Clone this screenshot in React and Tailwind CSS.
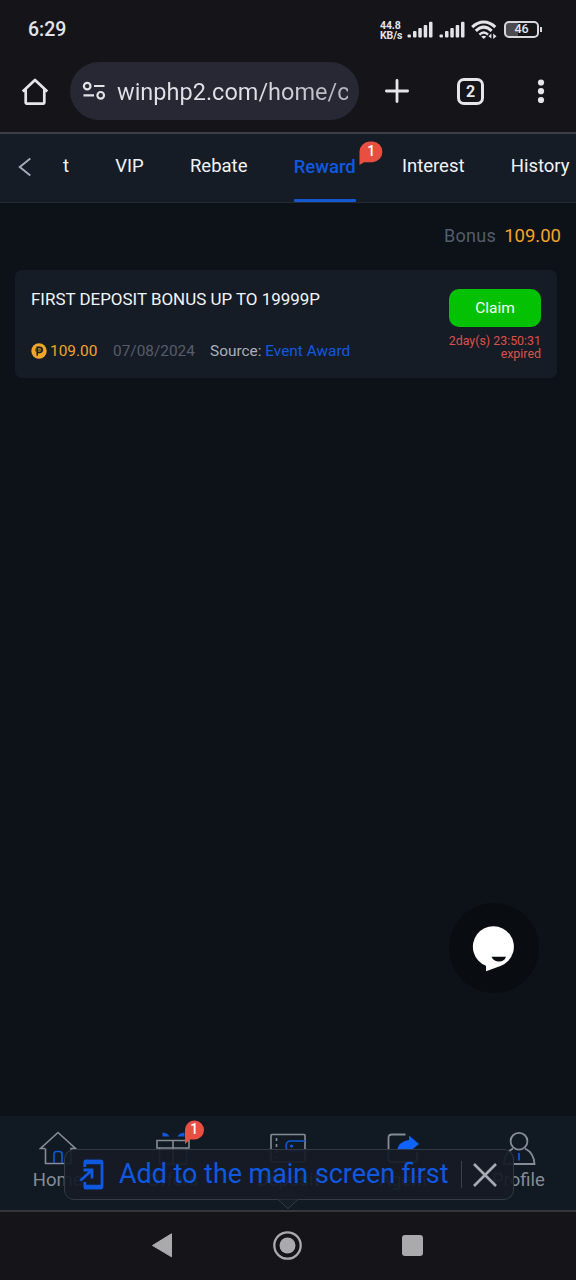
import React from "react";

function SignalBars() {
  return (
    <svg className="h-[18px] w-[27px]" viewBox="0 0 27 18" fill="#e4e4e8">
      <rect x="0.5" y="13.5" width="3.5" height="3" rx="1" />
      <rect x="6" y="10" width="3.5" height="6.5" rx="1" />
      <rect x="11.3" y="7" width="3.5" height="9.5" rx="1" />
      <rect x="16.7" y="4" width="3.5" height="12.5" rx="1" />
      <rect x="22" y="0.8" width="3.5" height="15.7" rx="1" />
    </svg>
  );
}

function StatusBar() {
  return (
    <header className="flex h-[60px] items-center pb-px pl-7">
      <span className="w-[352px] text-[19.5px] font-medium leading-none text-[#e4e4e8]">6:29</span>
      <span className="w-[27px] pt-[3px] text-[10.5px] font-bold leading-[10px] tracking-[-0.1px] text-[#e4e4e8]">
        <span className="block">44.8</span>
        <span className="block">KB/s</span>
      </span>
      <SignalBars />
      <span className="w-[5px]" />
      <SignalBars />
      <svg className="ml-[5px] h-[20px] w-[26px]" viewBox="0 0 26 20" fill="none" stroke="#e4e4e8" strokeWidth="3">
        <path d="M1.2 7.2C8.2 0.4 17.3 0.4 24.3 7.2" />
        <path d="M4.8 10.9C10 6 15.5 6 20.7 10.9" />
        <path d="M8.4 14.6C11.2 11.9 14.3 11.9 17.1 14.6" strokeWidth="2.4" />
        <path d="M12.75 19L10.2 16.6C11.6 15.3 13.9 15.3 15.3 16.6Z" fill="#e4e4e8" stroke="none" />
        <path d="M17.5 16.2L20.4 13.6V18.6ZM25.5 16.2L22.2 19V13.6Z" fill="#e4e4e8" stroke="none" />
      </svg>
      <span className="ml-[7px] flex h-[17px] w-[35px] items-center justify-center rounded-[5px] border-2 border-[#d8d8dc] bg-linear-to-r from-[#4b4b50] from-40% to-[#151419] to-40% text-[12.5px] font-medium leading-none text-[#e4e4e8]">
        46
      </span>
      <span className="ml-px h-[5px] w-[2px] bg-[#d8d8dc]" />
    </header>
  );
}

function AddressBar() {
  return (
    <div className="flex h-[74px] items-start border-b-2 border-[#3d3e45] pt-0.5">
      <svg className="ml-[21px] mt-[15px] h-[30px] w-[28px]" viewBox="0 0 28 30" fill="none" stroke="#e6e5ea" strokeWidth="2.7">
        <path d="M1.7 14.5L14 3L26.3 14.5M4.7 12V25.8Q4.7 26.6 5.5 26.6H22.5Q23.3 26.6 23.3 25.8V12" strokeLinejoin="round" />
      </svg>
      <div className="ml-[21px] flex h-[58px] w-[289px] items-center rounded-full bg-[#282834] pl-[12px]">
        <svg className="h-[20px] w-[24px] shrink-0" viewBox="0 0 24 20" fill="none" stroke="#e1e1e8" strokeWidth="2.2">
          <circle cx="5.2" cy="5.1" r="3.3" />
          <circle cx="18.7" cy="14.3" r="3.3" />
          <path d="M12 5H22.5M1.5 14.4H12" />
        </svg>
        <span className="ml-[11px] mt-[2px] w-[231px] overflow-hidden whitespace-nowrap bg-linear-to-r from-[#e1e1e8] from-58% to-[#b2b1bc] bg-clip-text text-[23.5px] leading-[34px] text-transparent">
          winphp2.com/home/c
        </span>
      </div>
      <svg className="ml-[26px] mt-[17px] h-[24px] w-[24px]" viewBox="0 0 24 24" stroke="#e6e5ea" strokeWidth="2.8">
        <path d="M12 1.4V22.6M1.4 12H22.6" strokeLinecap="round" />
      </svg>
      <span className="ml-[48px] mt-[16px] flex h-[27px] w-[27px] items-center justify-center rounded-[7px] border-[3px] border-[#e6e5ea] text-[16px] font-bold leading-none text-[#e6e5ea]">
        2
      </span>
      <svg className="ml-[53px] mt-[17px] h-[26px] w-[8px]" viewBox="0 0 8 26" fill="#e6e5ea">
        <circle cx="4" cy="3.5" r="3.1" />
        <circle cx="4" cy="12.2" r="3.1" />
        <circle cx="4" cy="21" r="3.1" />
      </svg>
    </div>
  );
}

function Tabs() {
  return (
    <nav className="flex h-[69px] items-center overflow-hidden border-b border-[#252b34] bg-[#161c26] text-[18.5px] text-[#f2f4f8]">
      <svg className="mb-[2px] ml-[18px] h-[20px] w-[14px] shrink-0" viewBox="0 0 14 20" fill="none" stroke="#a3a9b6" strokeWidth="2">
        <path d="M12.3 1.5L1.8 10L12.3 18.5" />
      </svg>
      <div className="ml-[31px] flex h-full gap-[46.2px] leading-[65px]">
        <span>t</span>
        <span>VIP</span>
        <span>Rebate</span>
        <span className="relative h-[68px] leading-[67px] text-[18.5px] font-medium text-[#0e59e0]">
          Reward
          <span className="absolute inset-x-0 bottom-0 h-[3px] rounded-[1px] bg-[#1458d4]" />
          <span className="absolute left-[65px] top-[7px] block h-[25px] w-[25px]">
            <svg className="absolute inset-0" viewBox="0 0 25 25" fill="#e94f40">
              <path d="M0.5 24V10.5A10.3 10.3 0 0 1 10.8 0.5H14A10.4 10.4 0 0 1 14 21.2H5Z" />
            </svg>
            <span className="absolute inset-0 text-center text-[14px] font-medium leading-[21px] text-white">1</span>
          </span>
        </span>
        <span>Interest</span>
        <span>History</span>
      </div>
    </nav>
  );
}

function PesoCoin() {
  return (
    <svg className="h-[16px] w-[16px]" viewBox="0 0 16 16" fill="none">
      <circle cx="8" cy="8" r="7.7" fill="#f2a526" />
      <path d="M6.2 12.8V4.2H8.6A2.6 2.6 0 0 1 8.6 9.4H6.2" stroke="#161c26" strokeWidth="1.5" />
      <path d="M4 6.1H12.2M4 7.8H12.2" stroke="#161c26" strokeWidth="0.8" />
    </svg>
  );
}

function RewardCard() {
  return (
    <section className="ml-[15px] flex h-[108px] w-[542px] justify-between rounded-[7px] bg-[#161c26] pl-4 pr-4">
      <div className="flex flex-col pt-[19px]">
        <h2 className="text-[16.95px] leading-[20px] text-[#f2f4f8]">FIRST DEPOSIT BONUS UP TO 19999P</h2>
        <div className="mt-[32px] flex items-center text-[15.4px] leading-[20px]">
          <PesoCoin />
          <span className="ml-[3px] w-[63px] text-[#f2a526]">109.00</span>
          <span className="w-[97px] text-[#555d6c]">07/08/2024</span>
          <span className="text-[#a9afbb]">Source: <span className="text-[#0e59e0]">Event Award</span></span>
        </div>
      </div>
      <div className="flex w-[93px] flex-col items-end pt-[19px]">
        <button className="h-[38px] w-[92px] rounded-[10px] bg-[#04c104] text-[15.5px] leading-[37px] text-[#f5fff5]">Claim</button>
        <p className="mt-[7px] whitespace-nowrap text-right text-[12.4px] leading-[13px] text-[#dc5248]">
          2day(s) 23:50:31
          <br />
          expired
        </p>
      </div>
    </section>
  );
}

function HomeIcon() {
  return (
    <svg className="h-[38px] w-[38px]" viewBox="0 0 38 38" fill="none" stroke="#858c98" strokeWidth="1.6">
      <path d="M6 19.5H1.5L19 3.5L36.5 19.5H32V34.5H6.5V19.5" />
      <path d="M15 34V25Q15 22.5 17.5 22.5H20.5Q23 22.5 23 25V34" stroke="#0e59e0" />
    </svg>
  );
}

function GiftIcon() {
  return (
    <svg className="h-[38px] w-[38px]" viewBox="0 0 38 38" fill="none" stroke="#858c98" strokeWidth="1.6">
      <path d="M3 11.5H35V19H3ZM5.5 19V35H32.5V19M19 11.5V35" />
      <path d="M8.5 3.5Q14 4 15.5 7.5H8.5ZM30.5 3.5Q25 4 23.5 7.5H30.5Z" fill="#0e59e0" stroke="none" />
    </svg>
  );
}

function WalletIcon() {
  return (
    <svg className="h-[38px] w-[38px]" viewBox="0 0 38 38" fill="none" stroke="#858c98" strokeWidth="1.6">
      <rect x="2" y="5.5" width="34" height="27.5" rx="1" />
      <path d="M7.5 9V29" strokeDasharray="3 3" />
      <path d="M36 12H22C18.5 12 17 14 17 17S18.5 22 22 22H36" stroke="#0e59e0" />
      <circle cx="22.5" cy="17" r="1.6" fill="#0e59e0" stroke="none" />
    </svg>
  );
}

function ShareIcon() {
  return (
    <svg className="h-[38px] w-[38px]" viewBox="0 0 38 38" fill="none" stroke="#858c98" strokeWidth="1.8">
      <path d="M21.5 5.5H8Q4.5 5.5 4.5 9V30Q4.5 33 8 33H29Q33 33 33 30V23" />
      <path d="M25 6.5L35 15L25 23V20.5Q17 19 12.5 23Q14.5 12 25 11Z" fill="#0f62fa" stroke="none" />
    </svg>
  );
}

function ProfileIcon() {
  return (
    <svg className="h-[38px] w-[38px]" viewBox="0 0 38 38" fill="none" stroke="#858c98" strokeWidth="1.8">
      <circle cx="20" cy="12.2" r="8.4" />
      <path d="M14 19.5Q5.5 24 5 35H35.5Q35 24 26 19.5" />
      <path d="M20 24V31.5" stroke="#0e59e0" />
    </svg>
  );
}

const menu = [
  { label: "Home", Icon: HomeIcon },
  { label: "Offers", Icon: GiftIcon, count: 1 },
  { label: "Deposit", Icon: WalletIcon },
  { label: "Agent", Icon: ShareIcon },
  { label: "Profile", Icon: ProfileIcon },
];

function InstallPrompt() {
  return (
    <div className="absolute left-[64px] top-[33px] flex h-[51px] w-[450px] items-center rounded-[10px] border border-[#343a44] bg-[#161b26]/93">
      <svg className="ml-[14px] h-[31px] w-[26px]" viewBox="0 0 26 31" fill="none" stroke="#0e59e0">
        <path d="M5.8 8V3.5Q5.8 2.2 7 2.2H22Q23 2.2 23 3.5V27.5Q23 28.8 22 28.8H7Q5.8 28.8 5.8 27.5V23" strokeWidth="2.8" />
        <path d="M5 3H23M5 28H23" strokeWidth="4.5" />
        <path d="M1.5 21.5L12.5 11.5M4.5 11H13V19.5" strokeWidth="2.8" />
      </svg>
      <span className="ml-[14px] w-[342px] whitespace-nowrap text-[26.9px] leading-none text-[#0e59e0]">Add to the main screen first</span>
      <span className="h-[27px] w-px bg-[#3b414c]" />
      <svg className="ml-[10px] h-[26px] w-[26px]" viewBox="0 0 26 26" stroke="#a7abb3" strokeWidth="2.6">
        <path d="M2 2L24 24M24 2L2 24" />
      </svg>
      <svg className="absolute left-[212px] top-[48px] h-[12px] w-[22px]" viewBox="0 0 22 12" fill="#151d27" stroke="#343a44">
        <path d="M1 1.5L11 10.7L21 1.5" />
      </svg>
    </div>
  );
}

function BottomMenu() {
  return (
    <footer className="relative grid h-[96px] grid-cols-5 border-b-2 border-[#35373d] bg-[#111a22]">
      {menu.map(({ label, Icon, count }) => (
        <div key={label} className="relative flex flex-col items-center pt-[13px] text-[18.5px] leading-[27px] text-[#858c98]">
          <Icon />
          <span>{label}</span>
          {count && (
            <span className="absolute left-[69px] top-[3px] z-10 block h-[25px] w-[20px]">
              <svg className="absolute inset-0" viewBox="0 0 20 25" fill="#e94f40">
                <path d="M1 25V10.5A9.5 9.5 0 1 1 10.5 20.5H6Z" />
              </svg>
              <span className="absolute inset-0 text-center text-[14px] font-medium leading-[21px] text-white">{count}</span>
            </span>
          )}
        </div>
      ))}
      <InstallPrompt />
    </footer>
  );
}

function SystemNav() {
  return (
    <div className="flex h-[68px] items-start bg-[#151419]">
      <svg className="ml-[151px] mt-[20px] h-[26px] w-[22px]" viewBox="0 0 22 26" fill="#aaaaad" stroke="#aaaaad" strokeLinejoin="round">
        <path d="M1.5 13.5L20.5 1.8V24.8Z" />
      </svg>
      <svg className="ml-[100px] mt-[19px] h-[29px] w-[29px]" viewBox="0 0 29 29">
        <circle cx="14.5" cy="14.5" r="13.2" fill="none" stroke="#aaaaad" strokeWidth="2.3" />
        <circle cx="14.5" cy="14.5" r="8" fill="#aaaaad" />
      </svg>
      <span className="ml-[100px] mt-[23px] h-[21px] w-[21px] rounded-[3px] bg-[#aaaaad]" />
    </div>
  );
}

export default function App() {
  return (
    <div className="flex h-[1280px] w-[576px] flex-col overflow-hidden bg-[#151419] font-['Roboto',sans-serif]">
      <StatusBar />
      <AddressBar />
      <Tabs />
      <main className="flex h-[913px] flex-col bg-[#0d1118]">
        <p className="flex h-[67px] items-center justify-end gap-[8px] pb-[2px] pr-[15px] text-[18px] leading-[20px] text-[#555d6c]">
          <span className="tracking-[0.3px]">Bonus</span>
          <span className="text-[18.5px] text-[#f2a526]">109.00</span>
        </p>
        <RewardCard />
        <button className="ml-[449px] mt-[525px] flex h-[90px] w-[90px] items-center justify-center rounded-full bg-[#090d11] pr-[2px] pt-px" aria-label="Chat">
          <svg className="h-[46px] w-[42px]" viewBox="0 0 42 46">
            <path d="M14 45.2V39.8A20.5 20.5 0 1 1 28.5 39.9Z" fill="#fff" />
            <path d="M19.5 30.7H34Q32.5 35.5 27 35.5T19.5 30.7Z" fill="#090d11" />
          </svg>
        </button>
      </main>
      <BottomMenu />
      <SystemNav />
    </div>
  );
}
